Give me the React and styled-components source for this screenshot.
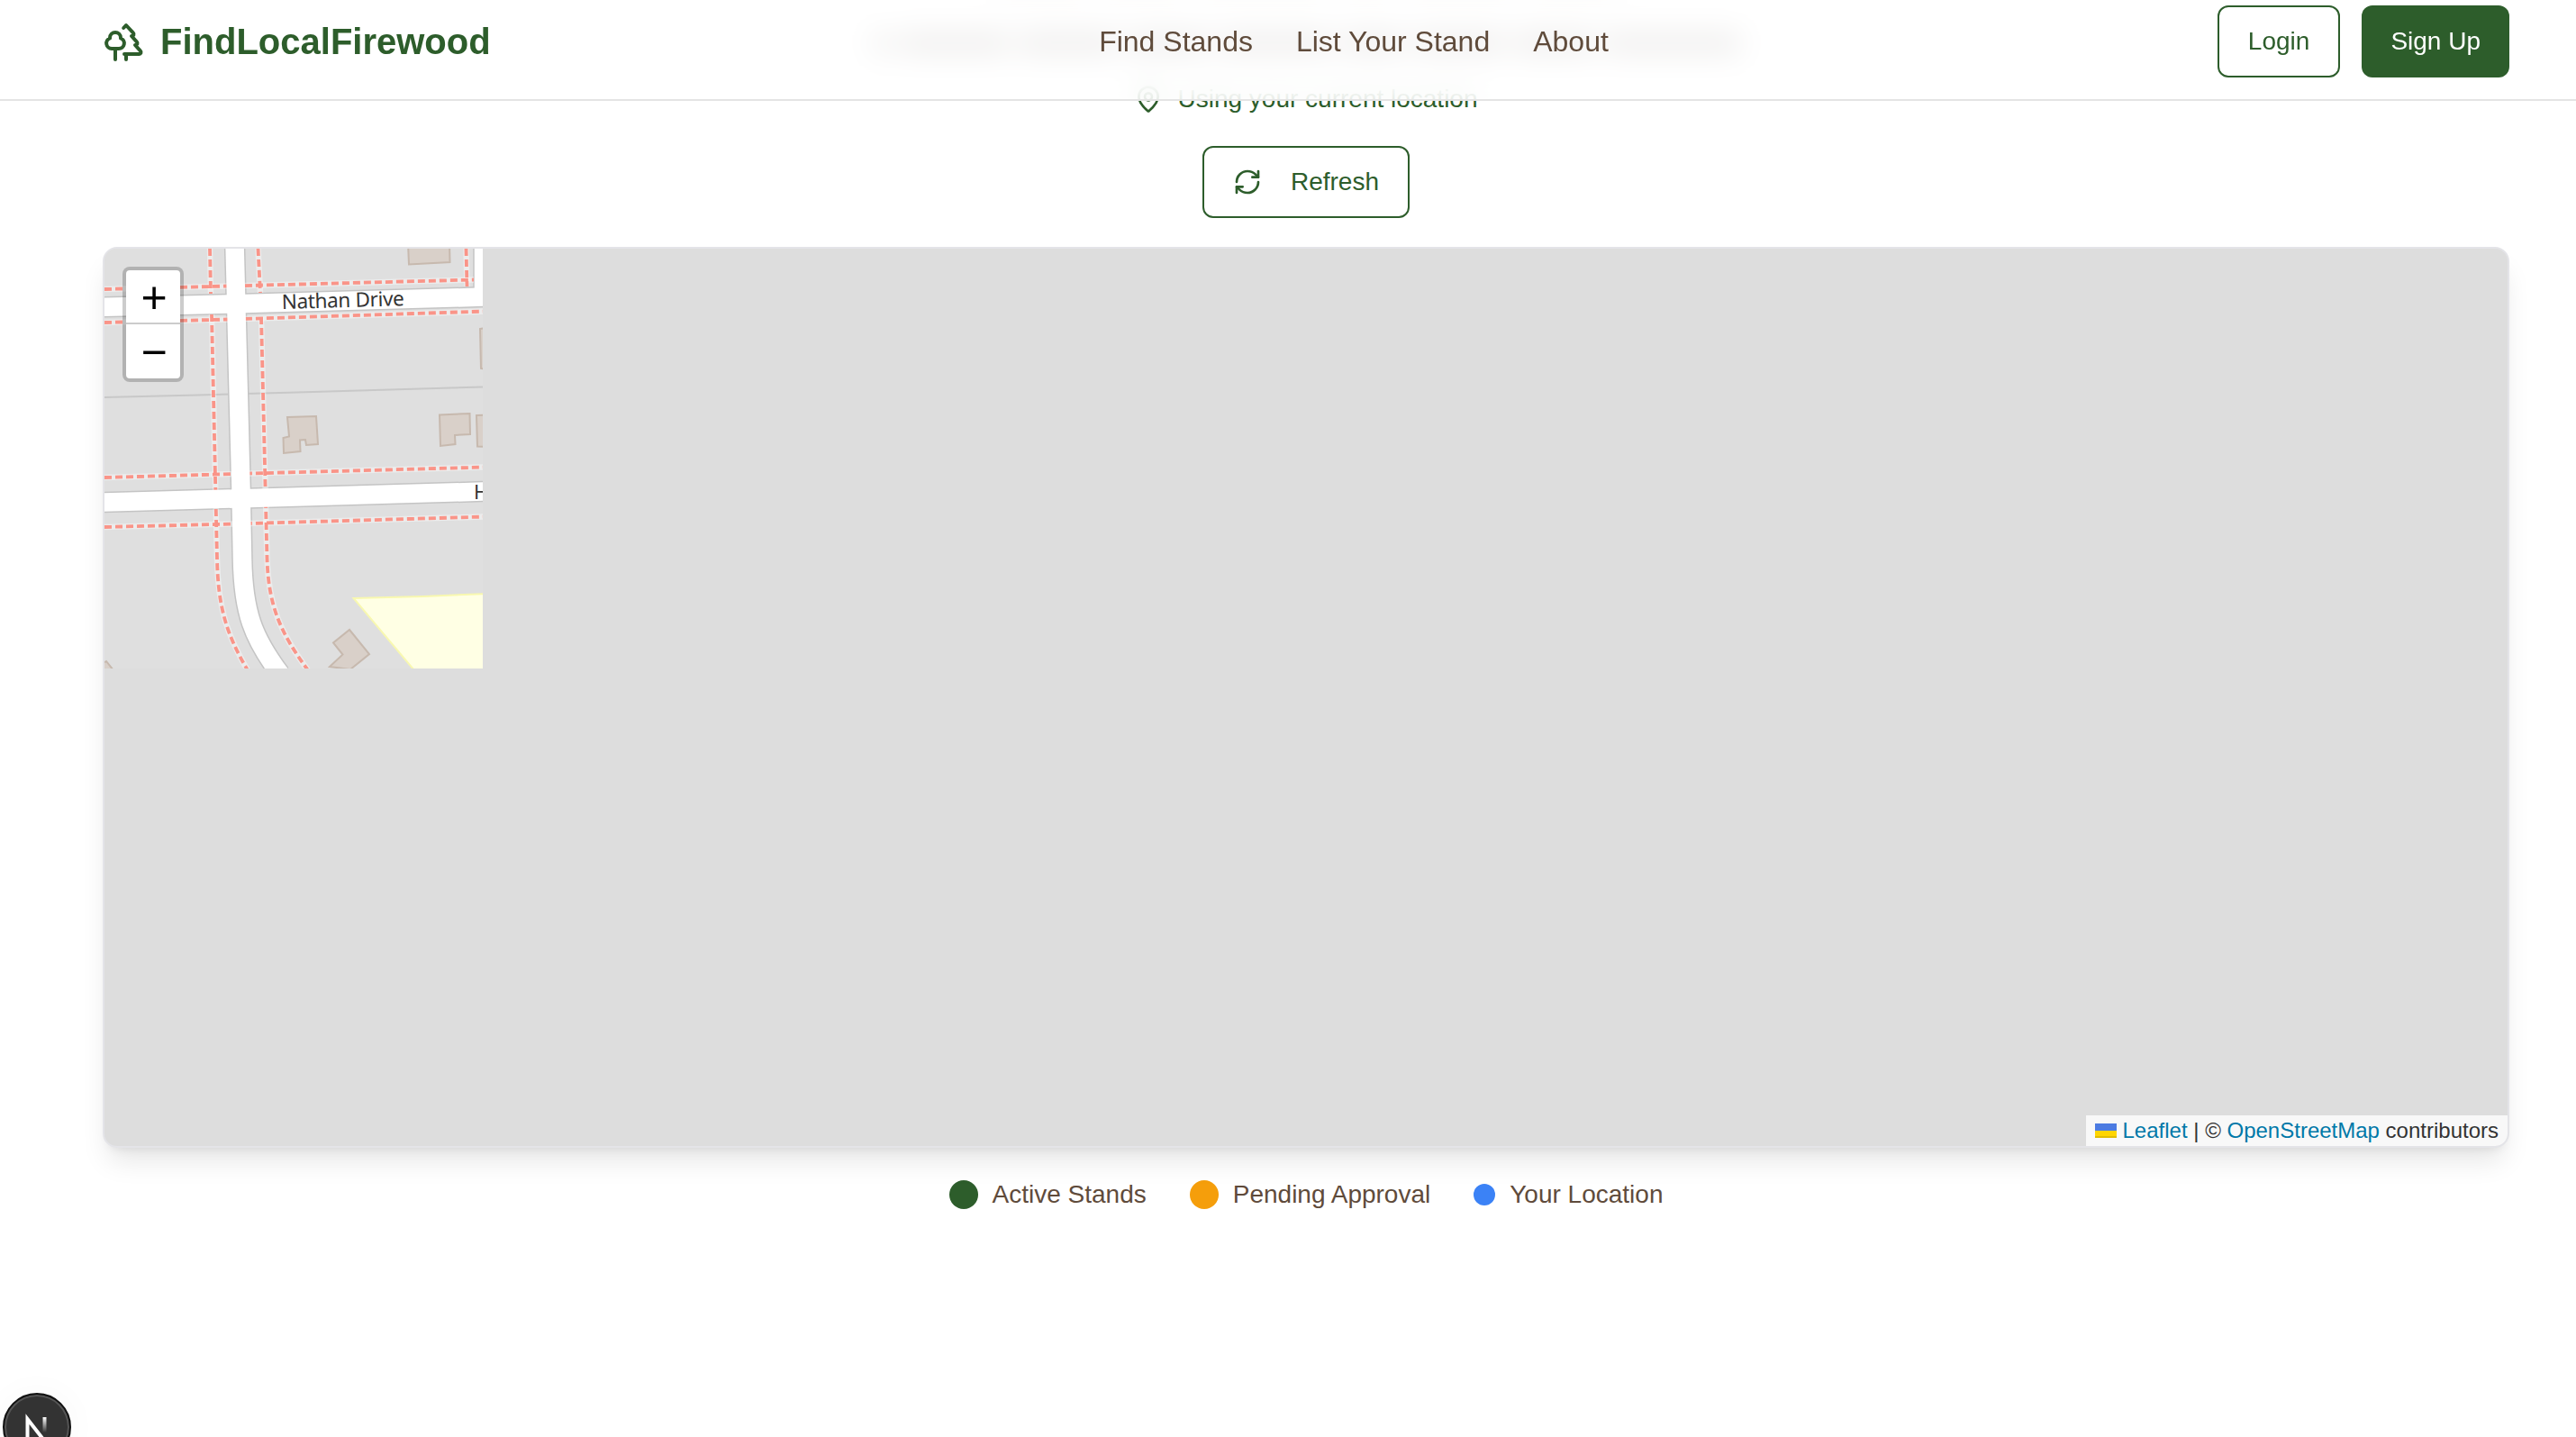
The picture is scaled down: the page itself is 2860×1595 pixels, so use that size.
import React from 'react';
import styled, { createGlobalStyle } from 'styled-components';
import { Trees, MapPin, RefreshCw } from 'lucide-react';

const green = '#2d5d2b';
const brown = '#5f4b3b';

const GlobalStyle = createGlobalStyle`
  *, *::before, *::after { box-sizing: border-box; }
  html, body { margin: 0; background: #fff; overflow: hidden; }
  body { font-family: "Liberation Sans", Arial, sans-serif; color: ${brown}; }
`;

const Page = styled.div`
  width: 100%;
  height: 1595px;
  overflow: hidden;
  background: #fff;
`;

const Header = styled.header`
  position: fixed;
  inset: 0 0 auto 0;
  z-index: 10;
  height: 112px;
  padding: 0 74px 18px 114px;
  display: grid;
  grid-template-columns: 1fr auto 1fr;
  align-items: center;
  background: rgba(255, 255, 255, 0.8);
  border-bottom: 2px solid #e4e4e4;
  backdrop-filter: blur(16px);
`;

const Brand = styled.a`
  display: flex;
  align-items: center;
  gap: 16px;
  color: ${green};
  font-size: 40px;
  line-height: 56px;
  font-weight: 700;
`;

const Nav = styled.nav`
  display: flex;
  gap: 48px;
  padding-left: 106px;
`;

const NavLink = styled.a`
  font-size: 32px;
  line-height: 48px;
  white-space: nowrap;
`;

const Actions = styled.div`
  display: flex;
  justify-content: flex-end;
  gap: 24px;
`;

const Button = styled.button`
  display: inline-flex;
  align-items: center;
  gap: 32px;
  height: 80px;
  padding: 0 32px;
  border: ${(p) => (p.$solid ? '0' : `2px solid ${green}`)};
  border-radius: 12px;
  background: ${(p) => (p.$solid ? green : 'transparent')};
  color: ${(p) => (p.$solid ? '#fff' : green)};
  font: 400 28px/40px "Liberation Sans", Arial, sans-serif;
  white-space: nowrap;
`;

const Main = styled.main`
  display: flex;
  flex-direction: column;
  align-items: center;
  padding: 0 74px 0 114px;
`;

const Intro = styled.div`
  display: flex;
  flex-direction: column;
  align-items: center;
  height: 90px;
`;

const IntroLine = styled.div`
  display: flex;
  gap: 11px;
  height: ${(p) => p.$height}px;
  padding-top: ${(p) => p.$top}px;
  filter: blur(${(p) => p.$blur}px);
`;

const Word = styled.span`
  width: ${(p) => p.$width}px;
  height: ${(p) => p.$height}px;
  background: rgba(88, 76, 68, ${(p) => p.$alpha});
`;

const Location = styled.div`
  display: flex;
  align-items: center;
  gap: 16px;
  height: 40px;
  margin-bottom: 32px;
  color: ${green};
  font-size: 28px;
  line-height: 40px;
`;

const MapCard = styled.section`
  position: relative;
  width: 100%;
  height: 1000px;
  margin: 32px 0;
  border: 2px solid #e4e4e8;
  border-radius: 16px;
  overflow: hidden;
  background: #ddd;
  box-shadow: 0 20px 30px -6px rgba(0, 0, 0, 0.1), 0 8px 12px -8px rgba(0, 0, 0, 0.1);
`;

const Tile = styled.svg`
  display: block;
  width: 420px;
  height: 466px;
`;

const ZoomControl = styled.div`
  position: absolute;
  top: 20px;
  left: 20px;
  border: 4px solid rgba(0, 0, 0, 0.2);
  border-radius: 8px;
  background: #fff;
  background-clip: padding-box;
`;

const ZoomButton = styled.a`
  display: flex;
  align-items: center;
  justify-content: center;
  width: 60px;
  height: 60px;
  padding: 2px 0 0 2px;
  border-bottom: ${(p) => (p.$divided ? '2px solid #ccc' : '0')};
  color: #000;
  font-size: 50px;
  line-height: 58px;
`;

const Attribution = styled.div`
  position: absolute;
  right: 0;
  bottom: 0;
  padding: 0 10px;
  background: rgba(255, 255, 255, 0.8);
  color: #333;
  font-size: 24px;
  line-height: 34px;
  white-space: nowrap;
`;

const MapLink = styled.a`
  color: #0078a8;
`;

const Flag = styled.svg`
  display: inline;
  width: 24px;
  height: 16px;
  vertical-align: baseline;
`;

const Legend = styled.div`
  display: flex;
  gap: 48px;
`;

const LegendItem = styled.div`
  display: flex;
  align-items: center;
  gap: 16px;
  font-size: 28px;
  line-height: 40px;
`;

const Dot = styled.span`
  width: ${(p) => p.$size}px;
  height: ${(p) => p.$size}px;
  border-radius: 50%;
  background: ${(p) => p.$color};
`;

const DevBadge = styled.div`
  position: fixed;
  left: 3px;
  top: 1546px;
  width: 76px;
  height: 76px;
  border-radius: 50%;
  border: 2px solid #111;
  background: #333;
  box-shadow: inset 0 0 0 2px #555, 0 0 40px rgba(0, 0, 0, 0.03);
`;

const firstLine = [110, 95, 150, 60, 130, 105];
const secondLine = [20, 120, 110, 90, 125, 70, 100, 90, 150];

const legend = [
  { label: 'Active Stands', color: green, size: 32 },
  { label: 'Pending Approval', color: '#f59e0b', size: 32 },
  { label: 'Your Location', color: '#3b82f6', size: 24 },
];

const roads = [
  'M100 341 L254 337.5 L540 329.5',
  'M100 558 L260 553.5 L540 545.5',
  'M260.5 270 L267.5 543 L269 620 C270 680 281 708 311 748',
  'M537 270 L537 330',
];

const footways = [
  'M116 321 L254 317.5 L526 310.5',
  'M116 358 L254 354.5 L540 345.5',
  'M233 276 L234 326',
  'M286.5 276 L289 325',
  'M517.5 276 L518.5 318',
  'M235 349 L241 620 C242 675 252 705 275 744',
  'M290 352 L296.5 620 C298 672 311 702 342 744',
  'M116 530 L260 526 L540 518.5',
  'M116 585 L260 581.5 L540 573.5',
];

const buildings = [
  'M453 270 L499 270 L499.5 291 L454 293.5Z',
  'M319 463 L351 462 L353 493 L340 494 L339 488 L333 488.5 L333.5 501 L315 503 L314.5 486 L321 484.5Z',
  'M488 460.5 L521.5 459 L522 482 L505 483 L505.5 493 L489 495Z',
  'M529 461 L540 460.5 L540 496 L530 495.5Z',
  'M533 365 L540 364 L540 410 L534 409Z',
  'M388 699 L410 726 L389 743 L366 740 L380.5 726.5 L370 713.5Z',
  'M110 738 L118 734 L126 744 L110 748Z',
];

function MapTile() {
  return (
    <Tile viewBox="116 276 420 466" fill="none">
      <rect x="116" y="276" width="420" height="466" fill="#dfdfdf" />
      <path d="M116 441 L220 438.5 L330 435.5 L536 429.5" stroke="#c8c8c8" strokeWidth="2" />
      <path d="M392.5 664 L470 662 L540 659 L540 750 L465 750Z" fill="#ffffe4" stroke="#f8f8b0" strokeWidth="2" />
      {buildings.map((d) => (
        <path key={d} d={d} fill="#d9d0c9" stroke="#c7b9ae" strokeWidth="2" />
      ))}
      {roads.map((d) => (
        <path key={d} d={d} stroke="#c4c4c4" strokeWidth="23.5" />
      ))}
      {footways.map((d) => (
        <path key={d} d={d} stroke="#fff" strokeOpacity="0.4" strokeWidth="6.5" />
      ))}
      {footways.map((d) => (
        <path key={d} d={d} stroke="#fa9488" strokeWidth="3.8" strokeDasharray="8 4" />
      ))}
      {roads.map((d) => (
        <path key={d} d={d} stroke="#fff" strokeWidth="20.5" />
      ))}
      <text
        x="313"
        y="343"
        transform="rotate(-1.6 313 343)"
        textLength="136"
        fontFamily="Noto Sans, sans-serif"
        fontSize="22.5"
        fill="#333"
      >
        Nathan Drive
      </text>
      <text x="526" y="553.5" fontFamily="Noto Sans, sans-serif" fontSize="22" fill="#333">
        H
      </text>
    </Tile>
  );
}

export default function App() {
  return (
    <Page>
      <GlobalStyle />
      <Header>
        <Brand>
          <Trees size={48} />
          FindLocalFirewood
        </Brand>
        <Nav>
          <NavLink>Find Stands</NavLink>
          <NavLink>List Your Stand</NavLink>
          <NavLink>About</NavLink>
        </Nav>
        <Actions>
          <Button>Login</Button>
          <Button $solid>Sign Up</Button>
        </Actions>
      </Header>

      <Main>
        <Intro aria-hidden="true">
          <IntroLine $height={18} $top={0} $blur={8}>
            {firstLine.map((w, i) => (
              <Word key={i} $width={w} $height={4} $alpha={0.3} />
            ))}
          </IntroLine>
          <IntroLine $height={56} $top={18} $blur={3}>
            {secondLine.map((w, i) => (
              <Word key={i} $width={w} $height={24} $alpha={0.48} />
            ))}
          </IntroLine>
        </Intro>
        <Location>
          <MapPin size={32} />
          Using your current location
        </Location>
        <Button>
          <RefreshCw size={32} />
          Refresh
        </Button>
        <MapCard>
          <MapTile />
          <ZoomControl>
            <ZoomButton $divided>+</ZoomButton>
            <ZoomButton>−</ZoomButton>
          </ZoomControl>
          <Attribution>
            <MapLink>
              <Flag viewBox="0 0 12 8">
                <path fill="#4C7BE1" d="M0 0h12v4H0z" />
                <path fill="#FFD500" d="M0 4h12v3H0z" />
                <path fill="#E0BC00" d="M0 7h12v1H0z" />
              </Flag>{' '}
              Leaflet
            </MapLink>
            {' | © '}
            <MapLink>OpenStreetMap</MapLink>
            {' contributors'}
          </Attribution>
        </MapCard>
        <Legend>
          {legend.map((item) => (
            <LegendItem key={item.label}>
              <Dot $size={item.size} $color={item.color} />
              {item.label}
            </LegendItem>
          ))}
        </Legend>
      </Main>

      <DevBadge>
        <svg width="72" height="72" viewBox="0 0 72 72" fill="none">
          <defs>
            <linearGradient id="stem" x1="0" y1="25" x2="0" y2="42" gradientUnits="userSpaceOnUse">
              <stop stopColor="#fff" />
              <stop offset="1" stopColor="#fff" stopOpacity="0" />
            </linearGradient>
          </defs>
          <path d="M25.5 52V27L48 56" stroke="#fff" strokeWidth="4" />
          <path d="M44.5 25V45" stroke="url(#stem)" strokeWidth="4" />
        </svg>
      </DevBadge>
    </Page>
  );
}
